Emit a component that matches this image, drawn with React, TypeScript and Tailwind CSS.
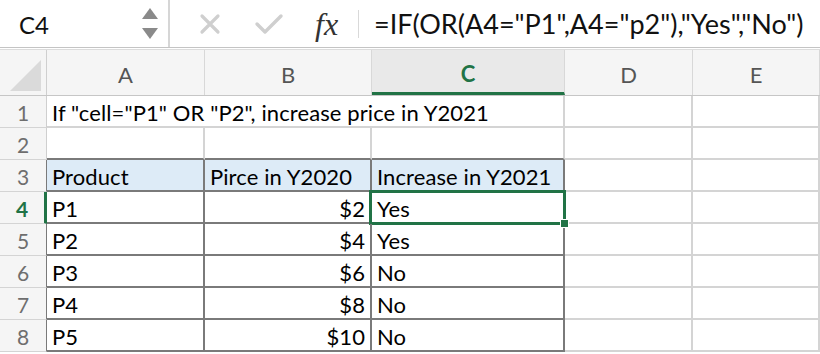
import React from "react";

const cols = [158, 167, 193, 128];
const letters = ["A", "B", "C", "D", "E"];

type Cell = { text?: string; right?: boolean; header?: boolean; table?: boolean };

const rows: Cell[][] = [
  [{ text: 'If "cell="P1" OR "P2", increase price in Y2021' }, {}, {}, {}, {}],
  [{}, {}, {}, {}, {}],
  [
    { text: "Product", header: true, table: true },
    { text: "Pirce in Y2020", header: true, table: true },
    { text: "Increase in Y2021", header: true, table: true },
    {},
    {},
  ],
  [{ text: "P1", table: true }, { text: "$2", right: true, table: true }, { text: "Yes", table: true }, {}, {}],
  [{ text: "P2", table: true }, { text: "$4", right: true, table: true }, { text: "Yes", table: true }, {}, {}],
  [{ text: "P3", table: true }, { text: "$6", right: true, table: true }, { text: "No", table: true }, {}, {}],
  [{ text: "P4", table: true }, { text: "$8", right: true, table: true }, { text: "No", table: true }, {}, {}],
  [{ text: "P5", table: true }, { text: "$10", right: true, table: true }, { text: "No", table: true }, {}, {}],
];

export default function App() {
  const font = "font-['Lato','Open_Sans',sans-serif]";
  return (
    <div className={`w-[820px] h-[354px] overflow-hidden bg-white ${font}`}>
      {/* Formula bar */}
      <div className="flex h-[48px] border-b border-[#c4c4c4] bg-white">
        <div className="w-[170px] flex items-center justify-between pl-[19px] pr-[10px] border-r-2 border-[#d6d6d6]">
          <span className="text-[24px] text-[#111] pt-[2px]">C4</span>
          <div className="flex flex-col gap-[9px] items-center">
            <svg width="16" height="11" viewBox="0 0 16 11"><polygon points="8,0 16,11 0,11" fill="#8a8a8a" /></svg>
            <svg width="16" height="11" viewBox="0 0 16 11"><polygon points="0,0 16,0 8,11" fill="#8a8a8a" /></svg>
          </div>
        </div>
        <div className="flex items-center">
          <svg className="ml-[29px]" width="22" height="22" viewBox="0 0 22 22">
            <path d="M3 3 L19 19 M19 3 L3 19" stroke="#cfcfcf" strokeWidth="3.2" strokeLinecap="round" />
          </svg>
          <svg className="ml-[33px]" width="30" height="22" viewBox="0 0 30 22">
            <path d="M3 11 L11 19 L27 3" stroke="#cfcfcf" strokeWidth="3.4" fill="none" strokeLinecap="round" strokeLinejoin="round" />
          </svg>
          <span className="ml-[31px] font-['Liberation_Serif',serif] italic text-[32px] text-[#333] leading-none">fx</span>
          <div className="ml-[20px] w-[1px] h-[28px] bg-[#d9d9d9]" />
          <span className="ml-[15px] text-[27px] text-[#111] whitespace-nowrap pt-[2px]">=IF(OR(A4="P1",A4="p2"),"Yes","No")</span>
        </div>
      </div>
      <div className="h-[2px] bg-white border-b border-[#dcdcdc]" />
      {/* Column headers */}
      <div className="flex h-[46px] border-b border-[#c6c6c6] bg-[#f5f5f5]">
        <div className="w-[47px] shrink-0 border-r border-[#cfcfcf] flex items-end justify-end pr-[5px] pb-[4px]">
          <svg width="31" height="31" viewBox="0 0 31 31"><polygon points="31,0 31,31 0,31" fill="#dadada" /></svg>
        </div>
        {letters.map((l, i) => (
          <div
            key={l}
            style={i < 4 ? { width: cols[i] } : undefined}
            className={`${i < 4 ? "shrink-0" : "flex-1"} flex items-center justify-center text-[22px] border-r border-[#d8d8d8] pt-[4px] ${
              l === "C" ? "text-[#217346] font-bold bg-[#e9e9e9] border-b-[3px] border-b-[#217346]" : "text-[#555]"
            }`}
          >
            {l}
          </div>
        ))}
      </div>
      {/* Rows */}
      {rows.map((r, ri) => {
        const rowNum = ri + 1;
        const inTable = rowNum >= 3;
        const sel = rowNum === 4;
        return (
          <div key={ri} className="flex h-[32px]">
            <div
              className={`w-[47px] shrink-0 bg-[#f5f5f5] flex items-center justify-center text-[21px] pt-[2px] border-b border-[#d4d4d4] ${
                sel
                  ? "text-[#217346] font-bold border-r-[3px] border-r-[#217346]"
                  : inTable
                  ? "text-[#6e6e6e] border-r border-r-[#7a7a7a]"
                  : "text-[#6e6e6e] border-r border-r-[#cfcfcf]"
              }`}
            >
              {rowNum}
            </div>
            {r.map((c, ci) => {
              const nextRowTable = rowNum + 1 >= 3 && ci < 3;
              const bottomDark = c.table || (rowNum === 2 && nextRowTable);
              const rightDark = c.table;
              const noRight = rowNum === 1 && ci < 2;
              const isSel = rowNum === 4 && ci === 2;
              const rightCls = noRight ? "border-r-0" : rightDark ? "border-r-2 border-r-[#7a7a7a]" : "border-r-2 border-r-[#d4d4d4]";
              return (
                <div
                  key={ci}
                  style={ci < 4 ? { width: cols[ci] } : undefined}
                  className={`${ci < 4 ? "shrink-0" : "flex-1"} relative flex items-center px-[5px] text-[22px] text-black whitespace-nowrap border-b-2 ${
                    bottomDark ? "border-b-[#7a7a7a]" : "border-b-[#d4d4d4]"
                  } ${rightCls} ${c.header ? "bg-[#ddebf7]" : ""} ${c.right ? "justify-end" : ""} ${
                    rowNum === 1 && ci === 0 ? "overflow-visible z-10" : ""
                  }`}
                >
                  <span className="pt-[3px] tracking-[0.1px]">{c.text}</span>
                  {isSel && (
                    <>
                      <div className="absolute left-[-3px] top-[-2px] right-[-3px] bottom-[-3px] border-[3px] border-[#217346] pointer-events-none" />
                      <div className="absolute right-[-6px] bottom-[-6px] w-[9px] h-[9px] bg-[#217346] border border-white z-20" />
                    </>
                  )}
                </div>
              );
            })}
          </div>
        );
      })}
    </div>
  );
}
